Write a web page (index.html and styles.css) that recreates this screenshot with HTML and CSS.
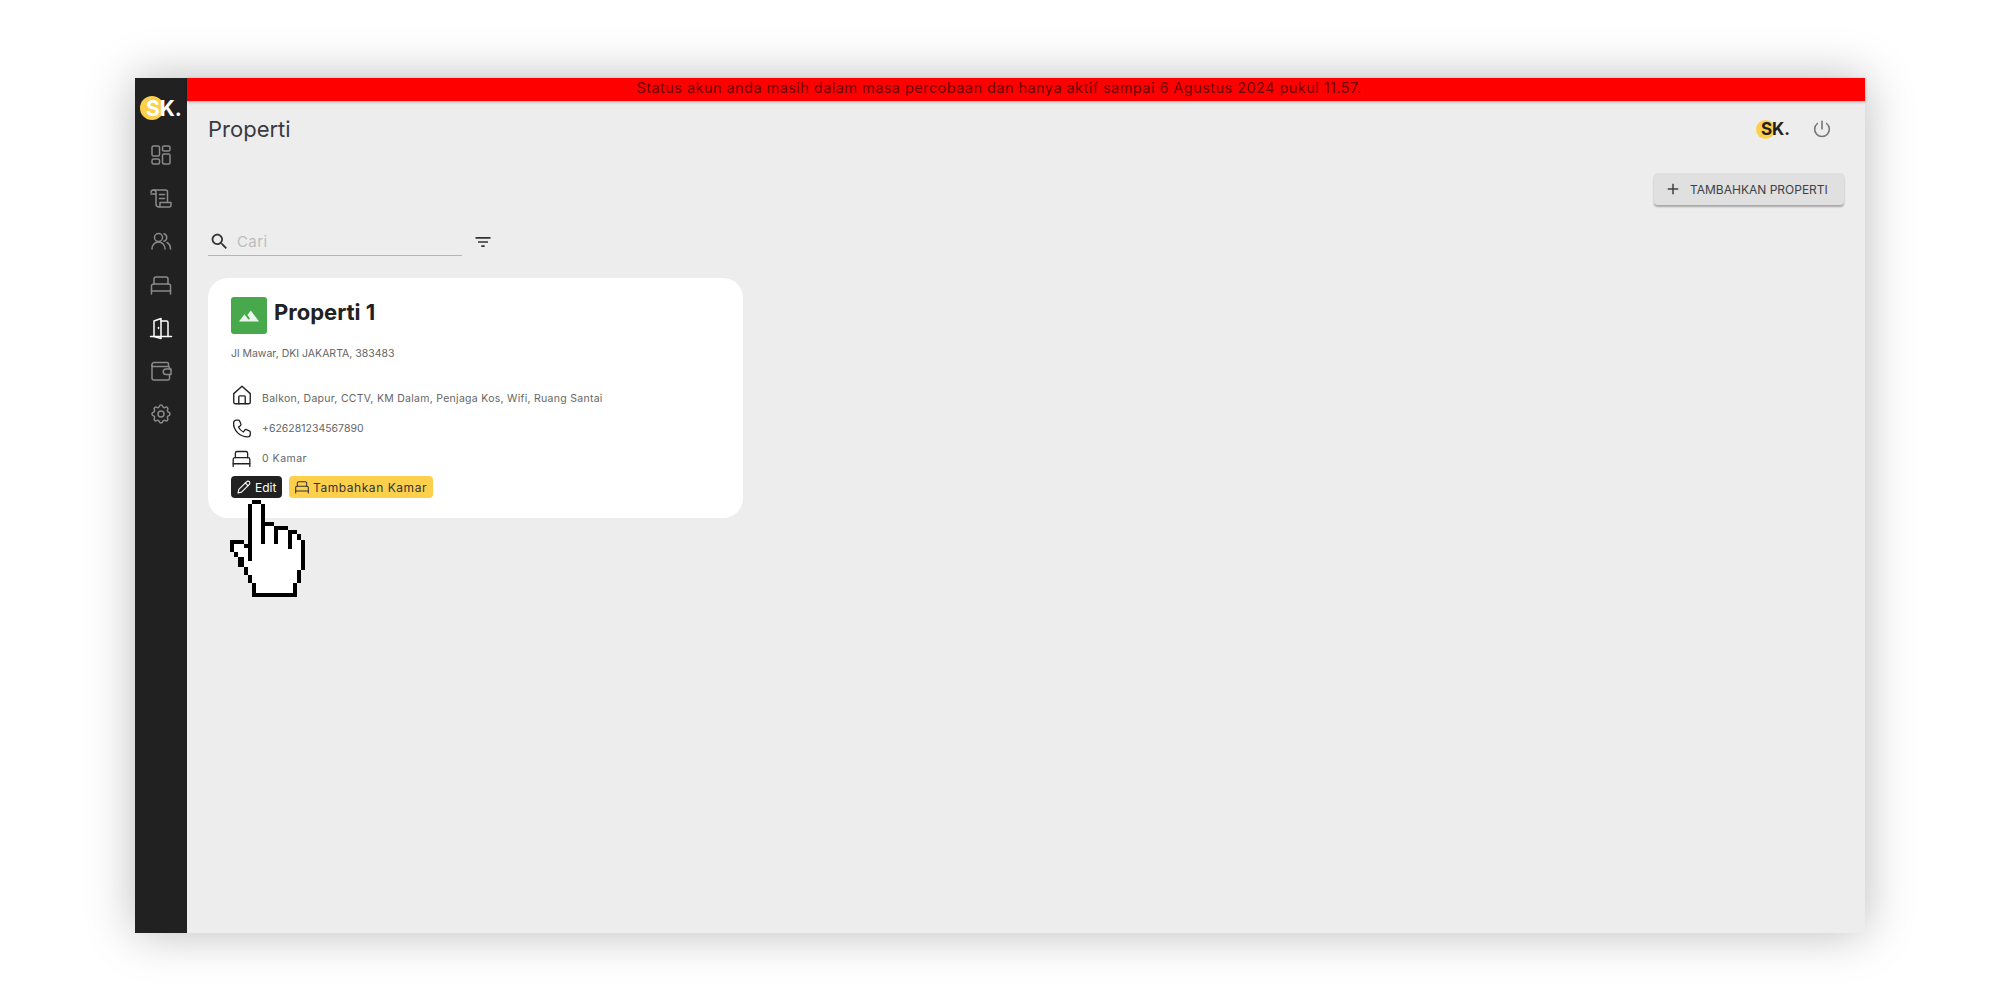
FILE: index.html
```html
<!DOCTYPE html>
<html lang="en">
<head>
    <meta charset="UTF-8">
    <title>Properti</title>
    <link rel="stylesheet" href="styles.css">
</head>
<body>
    <div class="window">
        <aside class="sidebar">
            <div class="logo logo-light"><span class="logo-dot"></span><span class="logo-text">SK.</span></div>
            <nav class="side-nav">
                <a class="side-link" href="#"><svg class="line-icon" viewBox="0 0 24 24"><rect x="3" y="3" width="7.5" height="10" rx="1.5"/><rect x="3" y="16" width="7.5" height="5" rx="1.5"/><rect x="13.5" y="3" width="7.5" height="5" rx="1.5"/><rect x="13.5" y="11" width="7.5" height="10" rx="1.5"/></svg></a>
                <a class="side-link" href="#"><svg class="line-icon" viewBox="0 0 24 24"><path d="M2 6.5A2.5 2.5 0 0 1 4.500 4H16.500a2 2 0 0 1 2 2v10"/><path d="M4.500 4A2.500 2.500 0 0 1 7 6.500V18a3 3 0 0 0 3 3h10a2 2 0 0 0 2-2v-2.500H11V18a3 3 0 0 1-1 3"/><path d="M2 8h5M10.500 8.500h5M10.500 12.500h5"/></svg></a>
                <a class="side-link" href="#"><svg class="line-icon" viewBox="0 0 24 24"><circle cx="9.500" cy="8.500" r="4"/><path d="M3 20c0-4 2.800-7 6.500-7s6.500 3 6.500 7"/><path d="M15 4.700a4 4 0 0 1 0 7.600"/><path d="M18 13.500c2.200 1.200 3.500 3.500 3.500 6.500"/></svg></a>
                <a class="side-link" href="#"><svg class="line-icon" viewBox="0 0 24 24"><path d="M5 11V6a2 2 0 0 1 2-2h10a2 2 0 0 1 2 2v5"/><path d="M2.500 13a2 2 0 0 1 2-2h15a2 2 0 0 1 2 2v5h-19z"/><path d="M2.500 18v3M21.500 18v3"/></svg></a>
                <a class="side-link side-link-active" href="#"><svg class="line-icon" viewBox="0 0 24 24"><path d="M1.500 20.500h21"/><path d="M5 20.500V5l7-2.500V22.500l-7-2"/><path d="M12 5h5.500a1.500 1.500 0 0 1 1.500 1.500v14"/><path d="M9.500 11.500v1"/></svg></a>
                <a class="side-link" href="#"><svg class="line-icon" viewBox="0 0 24 24"><path d="M3 7.500h16a1.500 1.500 0 0 1 1.500 1.500v1M3 7.500V5.500a2 2 0 0 1 2-2h13a1.500 1.500 0 0 1 1.500 1.500v2.500"/><path d="M3 6v13a2 2 0 0 0 2 2h14a1.500 1.500 0 0 0 1.500-1.500V15.500"/><path d="M22 10h-5a2.700 2.700 0 0 0 0 5.500h5z"/></svg></a>
                <a class="side-link" href="#"><svg class="line-icon" viewBox="0 0 24 24"><path d="M10.325 4.317c.426 -1.756 2.924 -1.756 3.350 0a1.724 1.724 0 0 0 2.573 1.066c1.543 -.94 3.310 .826 2.370 2.370a1.724 1.724 0 0 0 1.065 2.572c1.756 .426 1.756 2.924 0 3.350a1.724 1.724 0 0 0 -1.066 2.573c.94 1.543 -.826 3.310 -2.370 2.370a1.724 1.724 0 0 0 -2.572 1.065c-.426 1.756 -2.924 1.756 -3.350 0a1.724 1.724 0 0 0 -2.573 -1.066c-1.543 .94 -3.310 -.826 -2.370 -2.370a1.724 1.724 0 0 0 -1.065 -2.572c-1.756 -.426 -1.756 -2.924 0 -3.350a1.724 1.724 0 0 0 1.066 -2.573c-.94 -1.543 .826 -3.310 2.370 -2.370c1 .608 2.296 .07 2.572 -1.065z"/><circle cx="12" cy="12" r="3"/></svg></a>
            </nav>
        </aside>

        <main class="main">
            <div class="banner">Status akun anda masih dalam masa percobaan dan hanya aktif sampai 6 Agustus 2024 pukul 11.57.</div>

            <header class="topbar">
                <h1 class="page-title">Properti</h1>
                <div class="topbar-right">
                    <div class="logo logo-dark"><span class="logo-dot"></span><span class="logo-text">SK.</span></div>
                    <svg class="power-icon" viewBox="0 0 24 24"><path d="M7 6a8 8 0 1 0 10 0"/><path d="M12 3.500v8.500"/></svg>
                </div>
            </header>

            <div class="actions">
                <button class="add-button" type="button">
                    <svg class="add-icon" viewBox="0 0 24 24"><path d="M19 13h-6v6h-2v-6H5v-2h6V5h2v6h6v2z"/></svg>
                    TAMBAHKAN PROPERTI
                </button>
            </div>

            <div class="search-row">
                <label class="search-field">
                    <svg class="search-icon" viewBox="0 0 24 24"><path d="M15.500 14h-.79l-.28-.27C15.410 12.590 16 11.110 16 9.500 16 5.910 13.090 3 9.500 3S3 5.910 3 9.500 5.910 16 9.500 16c1.610 0 3.090-.59 4.230-1.570l.27.28v.79l5 4.990L20.490 19l-4.990-5zm-6 0C7.010 14 5 11.990 5 9.500S7.010 5 9.500 5 14 7.010 14 9.500 11.990 14 9.500 14z"/></svg>
                    <span class="search-placeholder">Cari</span>
                </label>
                <svg class="filter-icon" viewBox="0 0 24 24"><path d="M10 18h4v-2h-4v2zM3 6v2h18V6H3zm3 7h12v-2H6v2z"/></svg>
            </div>

            <section class="card">
                <div class="card-head">
                    <span class="card-thumb"><svg viewBox="0 0 24 24"><path d="M14 6l-3.750 5 2.850 3.800-1.600 1.200C9.810 13.750 7 10 7 10l-6 8h22L14 6z"/></svg></span>
                    <h2 class="card-title">Properti 1</h2>
                </div>
                <p class="card-address">Jl Mawar, DKI JAKARTA, 383483</p>

                <div class="info-row info-row-home">
                    <svg class="info-icon" viewBox="0 0 24 24"><path d="M3 10.500 12 2.500l9 8V20a1.500 1.500 0 0 1-1.500 1.500h-15A1.500 1.500 0 0 1 3 20z"/><path d="M8.500 21.500V14a1 1 0 0 1 1-1h5a1 1 0 0 1 1 1v7.500"/></svg>
                    <span>Balkon, Dapur, CCTV, KM Dalam, Penjaga Kos, Wifi, Ruang Santai</span>
                </div>
                <div class="info-row info-row-phone">
                    <svg class="info-icon" viewBox="0 0 24 24"><path d="M6 2.500h2.500a1.500 1.500 0 0 1 1.400 1L11.300 7a1.500 1.500 0 0 1-.6 1.800L8.500 10.300a12 12 0 0 0 5.700 5.700l1.500-2.200a1.500 1.500 0 0 1 1.800-.6l3.500 1.400a1.500 1.500 0 0 1 1 1.400v2.500a3 3 0 0 1-3 3C10 21.500 2.500 14 3 5.500a3 3 0 0 1 3-3z"/></svg>
                    <span>+626281234567890</span>
                </div>
                <div class="info-row info-row-bed">
                    <svg class="info-icon" viewBox="0 0 24 24"><path d="M5 11V6a2 2 0 0 1 2-2h10a2 2 0 0 1 2 2v5"/><path d="M2.500 13a2 2 0 0 1 2-2h15a2 2 0 0 1 2 2v5h-19z"/><path d="M2.500 18v3M21.500 18v3"/></svg>
                    <span>0 Kamar</span>
                </div>

                <div class="card-buttons">
                    <button class="chip chip-dark" type="button">
                        <svg class="chip-icon" viewBox="0 0 24 24"><path d="M3 21l1.300-5.300L16 4a2.800 2.800 0 0 1 4 4L8.300 19.700z"/><path d="M14 6l4 4"/></svg>
                        Edit
                    </button>
                    <button class="chip chip-yellow" type="button">
                        <svg class="chip-icon" viewBox="0 0 24 24"><path d="M5 11V6a2 2 0 0 1 2-2h10a2 2 0 0 1 2 2v5"/><path d="M2.500 13a2 2 0 0 1 2-2h15a2 2 0 0 1 2 2v5h-19z"/><path d="M2.500 18v3M21.500 18v3"/></svg>
                        Tambahkan Kamar
                    </button>
                </div>

                <svg class="hand-cursor" viewBox="0 0 300 330">
                    <path class="hand-fill" d="M97 42H122V109H163V121H203V133H230V150H243V240H230V280H218V310H109L97 280 85 255 72 230 55 200 42 187V162H72L85 175V42Z"/>
                    <path d="M97 30h25v12H97zM85 42h12v172H85zM122 42h13v120h-13zM135 97h28v12h-28zM163 109h12v53h-12zM175 109h28v12h-28zM203 121h12v55h-12zM215 121h15v12h-15zM230 133h13v17h-13zM243 150h12v90h-12zM230 240h13v40h-13zM218 280h12v32h-12zM97 310h133v12H97zM97 280h12v30H97zM85 255h12v25H85zM72 230h13v25H72zM55 200h17v30H55zM42 187h13v13H42zM30 162h12v25H30zM30 150h42v12H30zM72 162h13v12H72z"/>
                </svg>
            </section>
        </main>
    </div>
</body>
</html>
```

FILE: styles.css
```css
* {
    box-sizing: border-box;
    margin: 0;
    padding: 0;
}

body {
    font-family: 'Inter', 'Open Sans', sans-serif;
    background: #fff;
    color: #212121;
    height: 1000px;
    overflow: hidden;
}

.window {
    display: flex;
    height: 855px;
    margin: 78px 135px 0;
    box-shadow: 0 0 45px rgba(0, 0, 0, 0.27);
}

/* sidebar */
.sidebar {
    width: 52px;
    flex-shrink: 0;
    background: #212121;
}

.logo {
    position: relative;
    display: flex;
    align-items: center;
    font-weight: 700;
}

.logo-dot {
    border-radius: 50%;
    background: #fdd04b;
}

.logo-light {
    height: 40px;
    margin-top: 10px;
    padding-left: 5px;
    color: #fff;
}

.logo-light .logo-dot {
    width: 24px;
    height: 24px;
}

.logo-light .logo-text {
    font-size: 21px;
    margin-left: -18px;
    position: relative;
}

.logo-dark {
    color: #212121;
}

.logo-dark .logo-dot {
    width: 19px;
    height: 19px;
}

.logo-dark .logo-text {
    font-size: 17px;
    margin-left: -14px;
    position: relative;
}

.side-nav {
    display: flex;
    flex-direction: column;
    align-items: center;
    gap: 19.2px;
    margin-top: 15px;
}

.side-link {
    display: flex;
    color: #8a8a8a;
}

.side-link-active {
    color: #fff;
}

.line-icon {
    width: 24px;
    height: 24px;
    fill: none;
    stroke: currentColor;
    stroke-width: 1.5;
    stroke-linecap: round;
    stroke-linejoin: round;
}

/* main column */
.main {
    flex: 1;
    background: #ededed;
    display: flex;
    flex-direction: column;
}

.banner {
    height: 22.5px;
    line-height: 20px;
    padding-right: 54px;
    background: #f00;
    color: #6d0606;
    font-size: 14.5px;
    letter-spacing: 0.45px;
    text-align: center;
    white-space: nowrap;
    box-shadow: 0 1px 3px rgba(0, 0, 0, 0.3);
}

.topbar {
    display: flex;
    justify-content: space-between;
    align-items: center;
    height: 42px;
    margin-top: 7.5px;
    padding: 0 21px;
}

.page-title {
    font-size: 22px;
    font-weight: 400;
    color: #3a3a42;
}

.topbar-right {
    display: flex;
    align-items: center;
    gap: 21px;
    padding-right: 11px;
}

.power-icon {
    width: 22px;
    height: 22px;
    fill: none;
    stroke: #757575;
    stroke-width: 1.7;
    stroke-linecap: round;
}

.actions {
    display: flex;
    justify-content: flex-end;
    padding-right: 21px;
    margin-top: 23px;
}

.add-button {
    display: flex;
    align-items: center;
    gap: 8px;
    width: 190px;
    height: 32px;
    padding-left: 10px;
    border: none;
    border-radius: 4px;
    background: #e0e0e0;
    color: #3f3f46;
    font-family: inherit;
    font-size: 12px;
    font-weight: 400;
    box-shadow: 0 2px 2px rgba(0, 0, 0, 0.3);
}

.add-icon {
    width: 18px;
    height: 18px;
    fill: #3f3f46;
}

.search-row {
    display: flex;
    align-items: center;
    gap: 11px;
    padding-left: 21px;
    margin-top: 22px;
}

.search-field {
    display: flex;
    align-items: center;
    gap: 7px;
    width: 254px;
    height: 29px;
    padding-left: 1px;
    border-bottom: 1px solid #b5b5b5;
}

.search-icon {
    width: 21px;
    height: 21px;
    fill: #333;
}

.search-placeholder {
    font-size: 15px;
    letter-spacing: 0.4px;
    color: #bdbdbd;
}

.filter-icon {
    width: 20px;
    height: 20px;
    fill: #333;
}

/* property card */
.card {
    position: relative;
    width: 535px;
    height: 240px;
    margin: 22px 0 0 21px;
    padding: 19px 23px;
    background: #fff;
    border-radius: 20px;
}

.card-head {
    display: flex;
    align-items: center;
    gap: 7px;
}

.card-thumb {
    display: flex;
    align-items: center;
    justify-content: center;
    width: 36px;
    height: 37px;
    border-radius: 3px;
    background: #48a94c;
}

.card-thumb svg {
    width: 22px;
    height: 22px;
    fill: #e8f5e9;
}

.card-title {
    font-size: 22px;
    font-weight: 700;
    color: #212121;
    margin-top: -8px;
}

.card-address {
    font-size: 10.5px;
    color: #666;
    margin-top: 13px;
    line-height: 14px;
}

.info-row {
    display: flex;
    align-items: center;
    gap: 10px;
    font-size: 10.5px;
    color: #666;
    height: 24px;
}

.info-row-home {
    gap: 9px;
    margin-top: 25px;
    letter-spacing: 0.28px;
}

.info-row-home .info-icon {
    margin-top: -7px;
    width: 22px;
    height: 22px;
}

.info-row-phone {
    margin-top: 6.5px;
}

.info-row-bed {
    margin-top: 6px;
    letter-spacing: 0.5px;
}

.info-icon {
    width: 21px;
    height: 21px;
    flex-shrink: 0;
    fill: none;
    stroke: #212121;
    stroke-width: 1.5;
    stroke-linecap: round;
    stroke-linejoin: round;
}

.card-buttons {
    display: flex;
    gap: 7px;
    margin-top: 5.5px;
}

.chip {
    display: flex;
    align-items: center;
    gap: 3px;
    height: 22px;
    padding: 0 5px 0 5px;
    border: none;
    border-radius: 4px;
    font-family: inherit;
    font-size: 12px;
}

.chip-icon {
    width: 16px;
    height: 16px;
    fill: none;
    stroke: currentColor;
    stroke-width: 1.6;
    stroke-linecap: round;
    stroke-linejoin: round;
}

.chip-dark {
    width: 51px;
    background: #212121;
    color: #fff;
}

.chip-yellow {
    width: 144px;
    background: #fdd04b;
    color: #333;
    letter-spacing: 0.55px;
}

/* pointer drawn on top of the screenshot */
.hand-cursor {
    position: absolute;
    left: 12px;
    top: 212px;
    width: 100px;
    height: 110px;
    shape-rendering: crispEdges;
}

.hand-fill {
    fill: #fff;
}
```
